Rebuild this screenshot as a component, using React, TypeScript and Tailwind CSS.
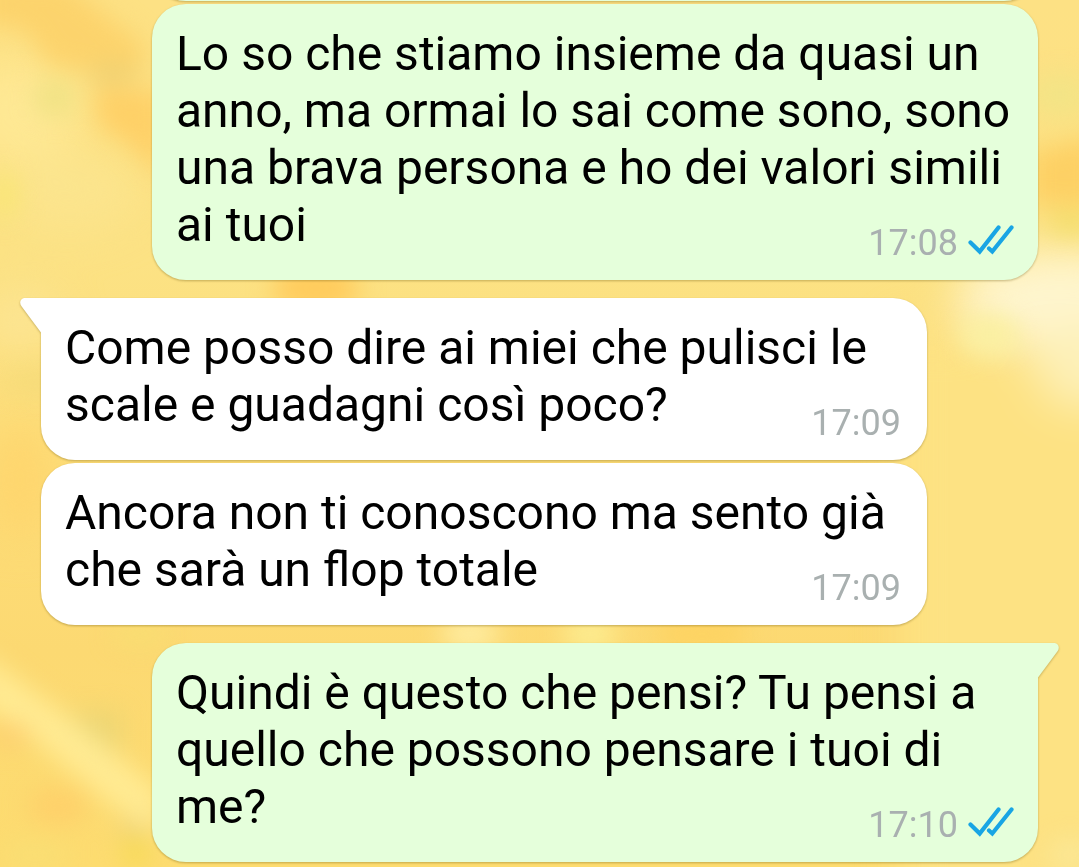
import clsx from "clsx";

interface Message {
  id: number;
  text: string;
  time: string;
  mine: boolean;
  tail?: boolean;
}

const messages: Message[] = [
  {
    id: 1,
    text: "Lo so che stiamo insieme da quasi un anno, ma ormai lo sai come sono, sono una brava persona e ho dei valori simili ai tuoi",
    time: "17:08",
    mine: true,
  },
  {
    id: 2,
    text: "Come posso dire ai miei che pulisci le scale e guadagni così poco?",
    time: "17:09",
    mine: false,
    tail: true,
  },
  {
    id: 3,
    text: "Ancora non ti conoscono ma sento già che sarà un flop totale",
    time: "17:09",
    mine: false,
  },
  {
    id: 4,
    text: "Quindi è questo che pensi? Tu pensi a quello che possono pensare i tuoi di me?",
    time: "17:10",
    mine: true,
    tail: true,
  },
];

function Wallpaper() {
  return (
    <svg
      aria-hidden="true"
      className="absolute inset-0 -z-10 h-full w-full"
      viewBox="0 0 1079 867"
      preserveAspectRatio="none"
      colorInterpolationFilters="sRGB"
    >
      <defs>
        <filter id="soft" x="-50%" y="-50%" width="200%" height="200%">
          <feGaussianBlur stdDeviation="12" />
        </filter>
        <filter id="softer" x="-50%" y="-50%" width="200%" height="200%">
          <feGaussianBlur stdDeviation="22" />
        </filter>
        <linearGradient id="base" x1="0" y1="0" x2="0" y2="1">
          <stop offset="0" stopColor="#fde184" />
          <stop offset="0.3" stopColor="#fce284" />
          <stop offset="0.55" stopColor="#fddd78" />
          <stop offset="0.75" stopColor="#fcd972" />
          <stop offset="1" stopColor="#fddc70" />
        </linearGradient>
      </defs>
      <rect width="1079" height="867" fill="url(#base)" />
      <g filter="url(#softer)">
        <rect x="900" y="330" width="260" height="600" fill="#fde283" />
        <ellipse cx="20" cy="110" rx="60" ry="50" fill="#fee894" />
        <ellipse cx="70" cy="190" rx="70" ry="40" fill="#fbe48d" />
        <ellipse cx="20" cy="320" rx="40" ry="30" fill="#fce594" />
        <ellipse cx="20" cy="480" rx="30" ry="60" fill="#fed56d" />
        <ellipse cx="1060" cy="300" rx="105" ry="50" fill="#fef5ce" />
        <ellipse cx="1085" cy="365" rx="50" ry="44" fill="#fdf0b8" />
      </g>
      <g filter="url(#soft)">
        <path d="M-20 -20H60L145 45L140 80L50 65L25 30L-20 22Z" fill="#fcd36c" />
        <ellipse cx="113" cy="74" rx="26" ry="9" fill="#ecd074" />
        <ellipse cx="55" cy="98" rx="20" ry="18" fill="#efe284" />
        <path d="M95 86L165 92V180L130 145L98 125Z" fill="#fed067" />
        <ellipse cx="5" cy="195" rx="14" ry="24" fill="#f9e677" />
        <ellipse cx="35" cy="382" rx="32" ry="10" fill="#f4da78" />
        <ellipse cx="1060" cy="95" rx="30" ry="20" fill="#f2e486" />
        <path d="M1030 152L1100 136V205H1030Z" fill="#fdd064" />
        <ellipse cx="1072" cy="222" rx="26" ry="12" fill="#f3de6c" />
        <ellipse cx="990" cy="335" rx="30" ry="20" fill="#faf0a2" />
        <ellipse cx="316" cy="288" rx="44" ry="24" fill="#ffcb5c" />
        <ellipse cx="470" cy="634" rx="30" ry="18" fill="#feeca0" />
        <ellipse cx="590" cy="634" rx="28" ry="18" fill="#fcec90" />
        <ellipse cx="702" cy="634" rx="48" ry="20" fill="#fdd362" />
        <ellipse cx="140" cy="634" rx="26" ry="12" fill="#f8de72" />
        <path d="M50 712H120V765L90 755Z" fill="#ebd574" />
        <path d="M-20 650L15 678L80 725L160 790V838L105 800L20 728L-20 705Z" fill="#ffea92" />
        <ellipse cx="10" cy="735" rx="20" ry="12" fill="#fdcf70" />
        <ellipse cx="58" cy="806" rx="30" ry="18" fill="#fed06a" />
        <ellipse cx="133" cy="828" rx="16" ry="6" fill="#e8d080" />
        <ellipse cx="35" cy="855" rx="34" ry="14" fill="#f9de74" />
        <ellipse cx="136" cy="852" rx="13" ry="13" fill="#f5da50" />
        <ellipse cx="1070" cy="855" rx="22" ry="16" fill="#fbe795" />
      </g>
    </svg>
  );
}

function Tail({ mine }: { mine: boolean }) {
  return (
    <svg
      aria-hidden="true"
      viewBox="0 0 22 35"
      className={clsx(
        "absolute top-0 h-[35px] w-[22px]",
        mine ? "-right-[21px] -scale-x-100 text-[#e5ffdb]" : "-left-[21px] text-white",
      )}
    >
      <path
        d="M22 0H5C0.600 0-1.200 4.800 1.500 8.200L21 34.500H22Z"
        fill="currentColor"
      />
    </svg>
  );
}

function ReadTicks() {
  return (
    <svg
      role="img"
      aria-label="Letto"
      viewBox="0 0 46 30"
      className="mt-[3px] h-[30px] w-[46px]"
      fill="none"
      stroke="#19a5e4"
      strokeWidth="4.200"
      strokeLinecap="round"
    >
      <path d="M2.500 17.500L11.700 26.500L30.500 2.500" />
      <path d="M21 23.500L24.300 26.500L43.500 2.500" />
    </svg>
  );
}

function Bubble({ message }: { message: Message }) {
  const { text, time, mine, tail } = message;
  return (
    <div
      className={clsx(
        "relative rounded-[34px] px-6 pt-[21px] pb-[27px] drop-shadow-[0_1px_1px_rgba(90,70,0,0.35)]",
        mine ? "ml-[111px] bg-[#e5ffdb]" : "mr-[111px] bg-white",
        tail && (mine ? "rounded-tr-none" : "rounded-tl-none"),
      )}
    >
      {tail && <Tail mine={mine} />}
      <p className="text-[48px] leading-[57px] text-black">
        {text}
        {/* floats beside the last line when there is room for it */}
        <span
          className={clsx(
            "float-right mt-[26px] flex items-start gap-2.5 text-[36px] leading-[42px] text-[#a9b0b0]",
            !mine && "mr-0.5",
          )}
        >
          <time>{time}</time>
          {mine && <ReadTicks />}
        </span>
      </p>
    </div>
  );
}

export default function App() {
  return (
    <main className="relative isolate min-h-screen overflow-hidden px-[41px] font-['Roboto',sans-serif]">
      <Wallpaper />
      {/* bottom edge of the previous message, scrolled out of view */}
      <div className="-mt-[67px] ml-[111px] h-[68px] rounded-[34px] bg-[#e5ffdb] drop-shadow-[0_1px_1px_rgba(90,70,0,0.35)]" />
      <ol>
        {messages.map((message, i) => (
          <li
            key={message.id}
            className={
              i === 0 || messages[i - 1].mine === message.mine
                ? "mt-[3px]"
                : "mt-[18px]"
            }
          >
            <Bubble message={message} />
          </li>
        ))}
      </ol>
    </main>
  );
}
